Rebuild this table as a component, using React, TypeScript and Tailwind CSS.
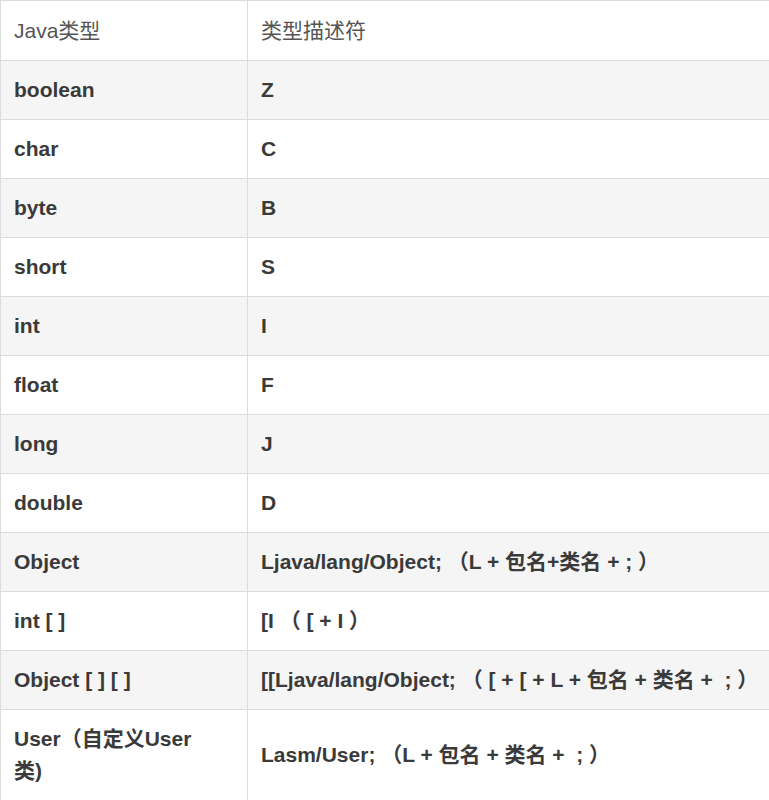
const rows: [string, string][] = [
  ["boolean", "Z"],
  ["char", "C"],
  ["byte", "B"],
  ["short", "S"],
  ["int", "I"],
  ["float", "F"],
  ["long", "J"],
  ["double", "D"],
  ["Object", "Ljava/lang/Object; （L + 包名+类名 + ; ）"],
  ["int [ ]", "[I （ [ + I ）"],
  ["Object [ ] [ ]", "[[Ljava/lang/Object; （ [ + [ + L + 包名 + 类名 +  ; ）"],
];

export default function App() {
  return (
    <div className="w-[769px] h-[800px] overflow-hidden bg-white font-['Liberation_Sans','Noto_Sans_CJK_SC',sans-serif] text-[21px] leading-[32px]">
      <table className="w-[800px] border-collapse table-fixed">
        <colgroup>
          <col className="w-[247px]" />
          <col />
        </colgroup>
        <thead>
          <tr className="bg-white">
            <td className="border border-[#dcdcdc] px-[13px] pt-[14px] pb-[13px] text-[#555] font-normal">Java类型</td>
            <td className="border border-[#dcdcdc] px-[13px] pt-[14px] pb-[13px] text-[#555] font-normal">类型描述符</td>
          </tr>
        </thead>
        <tbody>
          {rows.map(([t, d], i) => (
            <tr key={t} className={i % 2 === 0 ? "bg-[#f5f5f5]" : "bg-white"}>
              <td className="border border-[#dcdcdc] px-[13px] py-[13px] font-bold text-[#3a3a3a] whitespace-pre">{t}</td>
              <td className="border border-[#dcdcdc] px-[13px] py-[13px] font-bold text-[#3a3a3a] whitespace-pre">{d}</td>
            </tr>
          ))}
          <tr className="bg-white">
            <td className="border border-[#dcdcdc] px-[13px] py-[13px] font-bold text-[#3a3a3a]">
              User（自定义User
              <br />
              类)
            </td>
            <td className="border border-[#dcdcdc] px-[13px] py-[13px] font-bold text-[#3a3a3a] whitespace-pre">
              {"Lasm/User; （L + 包名 + 类名 +  ; ）"}
            </td>
          </tr>
        </tbody>
      </table>
    </div>
  );
}
